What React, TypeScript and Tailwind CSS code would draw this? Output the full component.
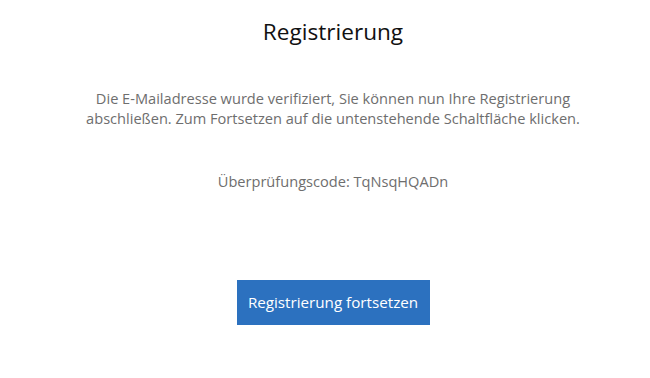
import React from "react";

export default function App() {
  return (
    <div
      className="w-[650px] h-[378px] bg-white pl-[16px] flex flex-col items-center"
      style={{ fontFamily: '"Open Sans", "Noto Sans", sans-serif' }}
    >
      <h1 className="mt-[16px] text-[22.6px] leading-[32px] text-[#111]">Registrierung</h1>
      <p className="mt-[40px] text-[14.6px] leading-[20px] text-[#6e6e6e] text-center">
        Die E-Mailadresse wurde verifiziert, Sie können nun Ihre Registrierung
        <br />
        abschließen. Zum Fortsetzen auf die untenstehende Schaltfläche klicken.
      </p>
      <p className="mt-[43px] text-[14.6px] leading-[20px] text-[#6e6e6e] text-center">
        Überprüfungscode: TqNsqHQADn
      </p>
      <button className="mt-[89px] w-[193px] h-[45px] bg-[#2c71bf] text-white text-[15.2px]">
        Registrierung fortsetzen
      </button>
    </div>
  );
}
